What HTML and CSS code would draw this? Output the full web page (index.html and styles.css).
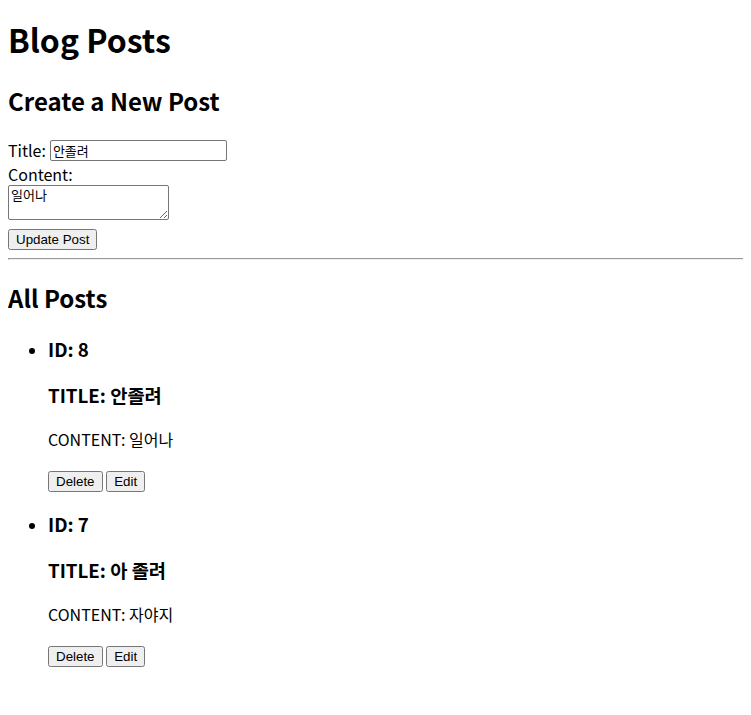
FILE: index.html
```html
<!DOCTYPE html>
<html lang="en">
<head>
<meta charset="utf-8">
<title>Blog Posts</title>
<link rel="stylesheet" href="styles.css">
</head>
<body>
<h1 class="page-title">Blog Posts</h1>
<h2>Create a New Post</h2>
<form class="post-form">
  <div class="row"><label>Title: </label><input class="title-input" type="text" value="안졸려"></div>
  <div class="row row-short"><label>Content:</label></div>
  <textarea class="content-input">일어나</textarea>
  <div class="submit-row"><button type="button" class="btn">Update Post</button></div>
</form>
<hr class="divider">
<h2>All Posts</h2>
<ul class="post-list">
  <li>
    <h3>ID: 8</h3>
    <h3>TITLE: 안졸려</h3>
    <p>CONTENT: 일어나</p>
    <button type="button" class="btn">Delete</button>
    <button type="button" class="btn">Edit</button>
  </li>
  <li>
    <h3>ID: 7</h3>
    <h3>TITLE: 아 졸려</h3>
    <p>CONTENT: 자야지</p>
    <button type="button" class="btn">Delete</button>
    <button type="button" class="btn">Edit</button>
  </li>
</ul>
</body>
</html>
```
FILE: styles.css
```css
html {
  overflow-x: hidden;
}
body {
  font-family: "Noto Sans CJK KR", "Noto Sans", sans-serif;
  color: #000;
  background: #fff;
}
.page-title {
  margin-top: 8px;
}
.row {
  height: 24px;
  display: flex;
  align-items: center;
}
.row-short {
  height: 23px;
}
.title-input {
  box-sizing: border-box;
  width: 177px;
  height: 21px;
  margin: 0 0 0 4px;
  padding: 1px 2px;
  border: 1px solid #767676;
  border-radius: 2px;
  font-family: "Noto Sans CJK KR", sans-serif;
  font-size: 13px;
  line-height: 17px;
}
.content-input {
  display: block;
  box-sizing: border-box;
  width: 161px;
  height: 35px;
  margin: 0;
  padding: 0 2px;
  border: 1px solid #767676;
  border-radius: 2px;
  font-family: "Noto Sans CJK KR", sans-serif;
  font-size: 13px;
  line-height: 17px;
}
.submit-row {
  margin-top: 5px;
}
.btn {
  font-family: "Liberation Sans", Arial, sans-serif;
  font-size: 13.33px;
}
.divider {
  box-sizing: border-box;
  width: calc(100% + 30px);
  margin: 8px 0 9px 0;
}
```
